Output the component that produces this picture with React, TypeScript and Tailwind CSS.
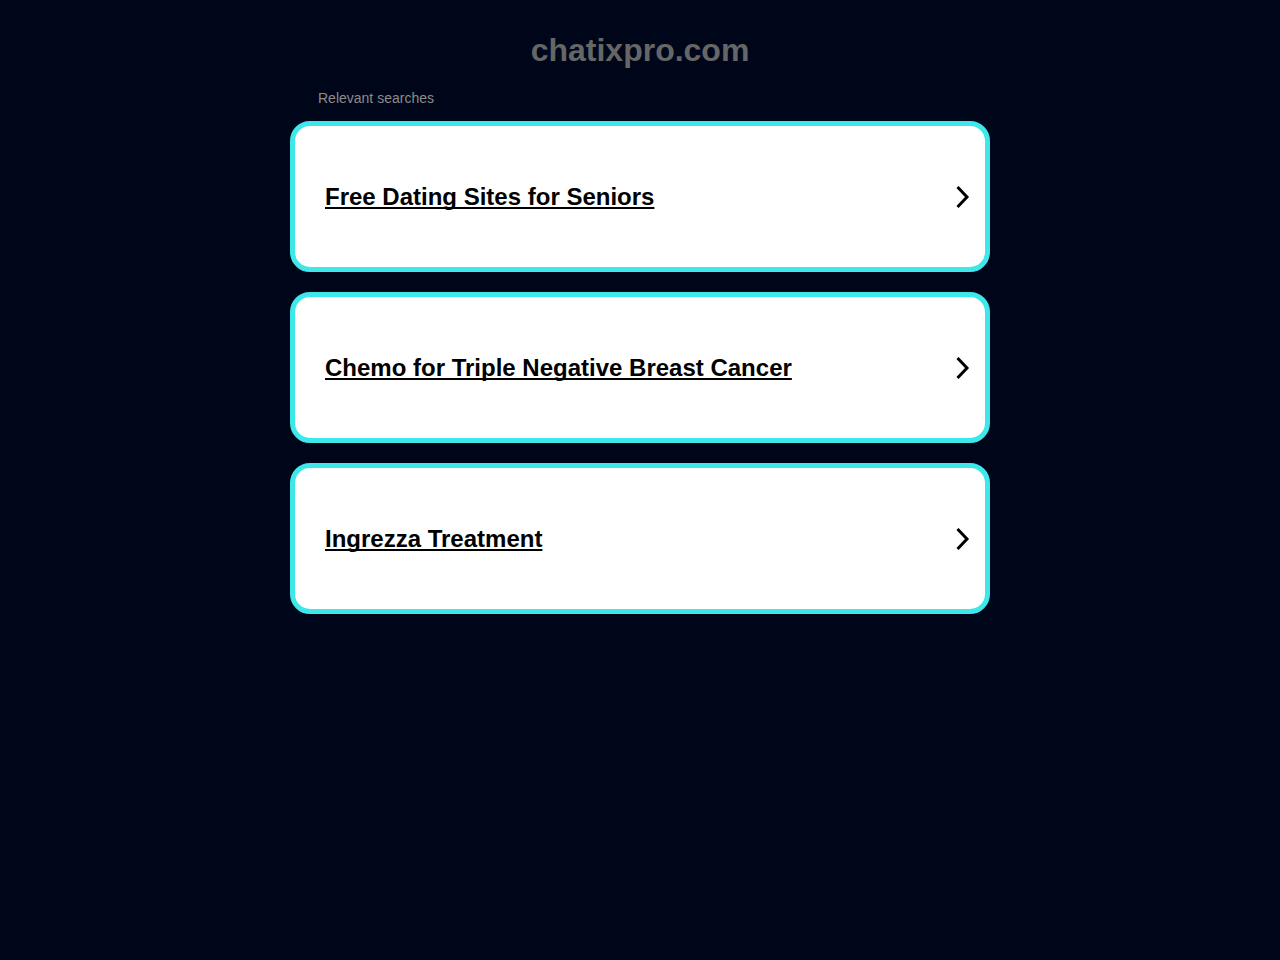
const items = [
  'Free Dating Sites for Seniors',
  'Chemo for Triple Negative Breast Cancer',
  'Ingrezza Treatment',
];

function Chevron() {
  return (
    <svg width="16" height="24" viewBox="0 0 16 24" className="shrink-0">
      <path d="M3.5 2 L13 12 L3.5 22" fill="none" stroke="#000" strokeWidth="3" />
    </svg>
  );
}

export default function App() {
  return (
    <div className="min-h-[960px] bg-[#000619] font-['Liberation_Sans',Arial,sans-serif]">
      <div className="w-[700px] mx-auto pt-[30px]">
        <h1 className="text-center text-[32px] leading-[40px] font-bold text-[#666666]">chatixpro.com</h1>
        <p className="mt-[19px] ml-[28px] text-[14px] leading-[18px] text-[#8c8c8c]">Relevant searches</p>
        <div className="mt-[14px] flex flex-col gap-[20px]">
          {items.map((t) => (
            <a
              key={t}
              href="#"
              className="h-[151px] flex items-center justify-between bg-white border-[5px] border-[#3ee8ea] rounded-[20px] pl-[30px] pr-[15px]"
            >
              <span className="text-[24px] leading-[28px] font-bold text-black underline underline-offset-[2px] [text-decoration-skip-ink:none]">{t}</span>
              <Chevron />
            </a>
          ))}
        </div>
      </div>
    </div>
  );
}
